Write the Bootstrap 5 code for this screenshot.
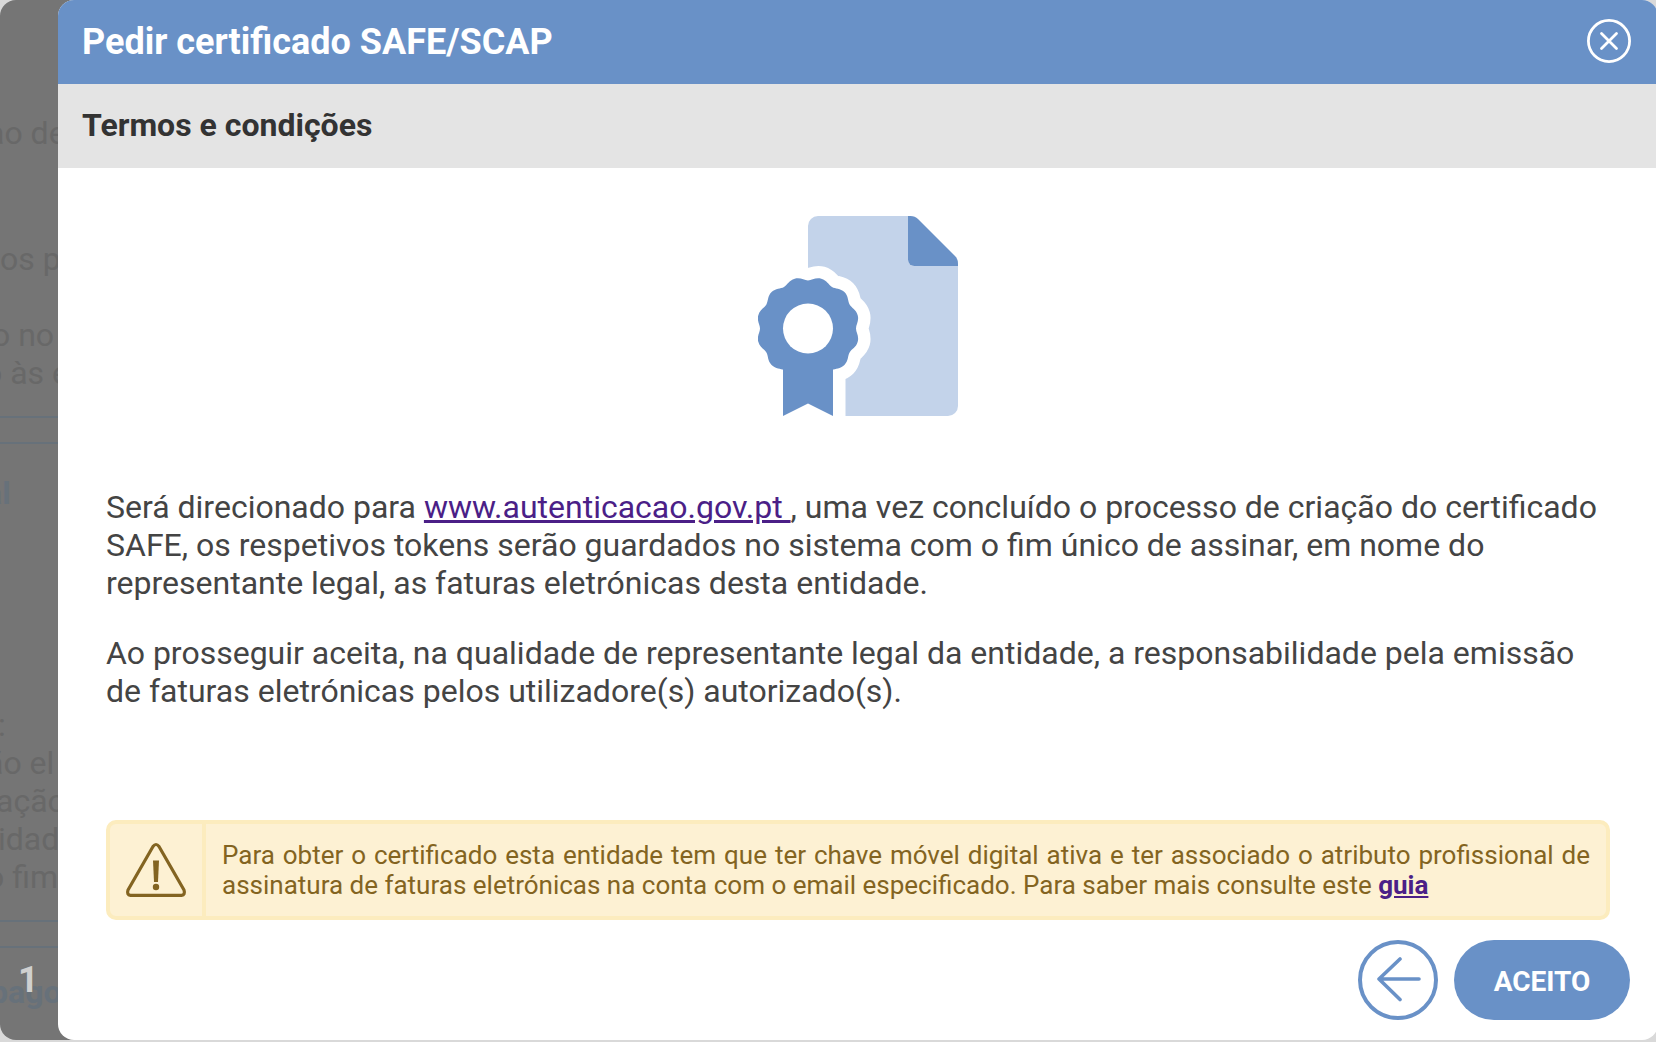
<!DOCTYPE html>
<html lang="pt">
  <head>
    <meta charset="UTF-8" />
    <meta name="viewport" content="width=device-width, initial-scale=1.0" />
    <title>Pedir certificado SAFE/SCAP</title>
    <link
      href="https://cdn.jsdelivr.net/npm/bootstrap@5.3.0/dist/css/bootstrap.min.css"
      rel="stylesheet"
    />
    <style>
      body {
        background: #d9d9d9;
        font-family: Roboto, "Liberation Sans", sans-serif;
        font-size: 32px;
        line-height: 38px;
        color: #444;
        overflow: hidden;
      }
      .screen {
        width: 1658px;
        height: 1040px;
      }

      /* dimmed page behind the dialog */
      .page-behind {
        width: 74px;
        margin-right: -16px;
        padding-top: 114px;
        background: #757575;
        border-radius: 16px 0 0 16px;
        color: #686868;
        white-space: nowrap;
      }
      .page-behind .rule {
        height: 2px;
        margin-top: 24px;
        background: #67717a;
      }
      .page-behind .heading {
        color: #67717a;
        font-weight: 700;
      }
      .page-number {
        left: 18px;
        bottom: 39px;
        font-size: 36px;
        line-height: 42px;
        font-weight: 700;
        color: #d0d0d0;
      }
      .line-1 { margin-left: -13px; }
      .line-2 { margin: 88px 0 0 0; }
      .line-3 { margin: 38px 0 0 -8px; }
      .line-4 { margin-left: -16px; }
      .line-5 { margin: 30px 0 0 -15px; }
      .line-6 { margin: 194px 0 0 -2px; }
      .line-7 { margin-left: -14px; }
      .line-8 { margin-left: -4px; }
      .line-9 { margin-left: -2px; }
      .line-10 { margin-left: -14px; }
      .line-11 { margin: 25px 0 0 -10px; }

      .dialog {
        z-index: 1;
        border-radius: 16px;
      }
      .dialog-title {
        height: 84px;
        padding: 0 26px 1px 24px;
        background: #6991c7;
        font-size: 36px;
      }
      .dialog-subtitle {
        height: 84px;
        padding: 0 24px 2px;
        background: #e4e4e4;
        color: #333;
        font-size: 32px;
      }
      .dialog-content {
        padding: 48px 48px 0;
      }
      .dialog-content p {
        margin-bottom: 32px;
      }
      .certificate {
        margin-bottom: 72px;
      }
      a.visited {
        color: #4b1f87;
      }

      .notice {
        height: 100px;
        margin-top: 110px;
        background: #fdf1d3;
        border: 4px solid #fcecbe;
        border-radius: 10px;
        color: #836421;
        font-size: 26px;
        line-height: 30px;
      }
      .notice-icon {
        width: 96px;
        border-right: 4px solid #fcecbe;
      }
      .notice-text {
        padding: 0 16px;
        text-align: justify;
      }

      .actions {
        padding: 20px 28px 20px;
        gap: 16px;
      }
      .btn-back {
        width: 80px;
        height: 80px;
        border: 4px solid #6991c7;
      }
      .btn-accept,
      .btn-accept:hover {
        width: 176px;
        height: 80px;
        background: #6991c7;
        color: #fff;
        font-size: 28px;
        font-weight: 700;
      }
    </style>
  </head>
  <body>
    <div class="screen d-flex">
      <div class="page-behind position-relative overflow-hidden flex-shrink-0">
        <div class="line-1">ao de</div>
        <div class="line-2">os p</div>
        <div class="line-3">o no</div>
        <div class="line-4">o às e</div>
        <div class="rule"></div>
        <div class="rule"></div>
        <div class="heading line-5">al</div>
        <div class="line-6">:</div>
        <div class="line-7">ão el</div>
        <div class="line-8">ação</div>
        <div class="line-9">idad</div>
        <div class="line-10">o fim</div>
        <div class="rule"></div>
        <div class="rule"></div>
        <div class="heading line-11">pago</div>
        <span class="page-number position-absolute">1</span>
      </div>

      <div class="dialog position-relative bg-white flex-grow-1 d-flex flex-column overflow-hidden">
        <div class="dialog-title d-flex align-items-center justify-content-between text-white fw-bold">
          <span>Pedir certificado SAFE/SCAP</span>
          <button type="button" class="btn p-0 border-0 text-white d-flex" aria-label="Fechar">
            <svg width="45" height="45" viewBox="0 0 45 45" fill="none" stroke="currentColor" stroke-width="2.8" stroke-linecap="round">
              <circle cx="22" cy="22" r="20.600" />
              <path d="M14.500 14.500L29.500 29.500M29.500 14.500L14.500 29.500" />
            </svg>
          </button>
        </div>
        <div class="dialog-subtitle d-flex align-items-center fw-bold">Termos e condições</div>

        <div class="dialog-content">
          <div class="certificate d-flex justify-content-center">
            <svg width="200" height="200" viewBox="0 0 200 200">
              <path fill="#c3d3ea" d="M60 0H150V43.750A6.250 6.250 0 0 0 156.250 50H200V190A10 10 0 0 1 190 200H50V10A10 10 0 0 1 60 0Z" />
              <path fill="#6991c7" d="M150 0H152.500Q157 0 160 3L197 40Q200 43 200 47.500V50H156.250A6.250 6.250 0 0 1 150 43.750Z" />
              <path fill="#fff" d="M49 112H87.500V200H49Z" />
              <path
                transform="translate(50 112.500)"
                fill="#fff"
                stroke="#fff"
                stroke-width="25"
                d="M0-48C4-48 7.500-51.300 13.300-49.700S20.500-43.600 24-41.600S32.200-40.600 36.400-36.400S39.600-27.500 41.600-24S48.100-19.100 49.700-13.300S48-4 48 0S51.300 7.500 49.700 13.300S43.600 20.500 41.600 24S40.600 32.200 36.400 36.400S27.500 39.600 24 41.600S19.100 48.100 13.300 49.700S4 48 0 48S-7.500 51.300-13.300 49.700S-20.500 43.600-24 41.600S-32.200 40.600-36.400 36.400S-39.600 27.500-41.600 24S-48.100 19.100-49.700 13.300S-48 4-48 0S-51.300-7.500-49.700-13.300S-43.600-20.500-41.600-24S-40.600-32.200-36.400-36.400S-27.500-39.600-24-41.600S-19.100-48.100-13.300-49.700S-4-48 0-48Z"
              />
              <path
                transform="translate(50 112.500)"
                fill="#6991c7"
                d="M0-48C4-48 7.500-51.300 13.300-49.700S20.500-43.600 24-41.600S32.200-40.600 36.400-36.400S39.600-27.500 41.600-24S48.100-19.100 49.700-13.300S48-4 48 0S51.300 7.500 49.700 13.300S43.600 20.500 41.600 24S40.600 32.200 36.400 36.400S27.500 39.600 24 41.600S19.100 48.100 13.300 49.700S4 48 0 48S-7.500 51.300-13.300 49.700S-20.500 43.600-24 41.600S-32.200 40.600-36.400 36.400S-39.600 27.500-41.600 24S-48.100 19.100-49.700 13.300S-48 4-48 0S-51.300-7.500-49.700-13.300S-43.600-20.500-41.600-24S-40.600-32.200-36.400-36.400S-27.500-39.600-24-41.600S-19.100-48.100-13.300-49.700S-4-48 0-48Z"
              />
              <path fill="#6991c7" d="M25 140H75V200L50 187.500L25 200Z" />
              <circle cx="50" cy="112.500" r="25" fill="#fff" />
            </svg>
          </div>

          <p>
            Será direcionado para
            <a href="#" class="visited">www.autenticacao.gov.pt </a>, uma vez concluído o processo
            de criação do certificado SAFE, os respetivos tokens serão guardados no sistema com o
            fim único de assinar, em nome do representante legal, as faturas eletrónicas desta
            entidade.
          </p>
          <p>
            Ao prosseguir aceita, na qualidade de representante legal da entidade, a
            responsabilidade pela emissão de faturas eletrónicas pelos utilizadore(s) autorizado(s).
          </p>

          <div class="notice d-flex">
            <div class="notice-icon flex-shrink-0 d-flex align-items-center justify-content-center">
              <svg width="62" height="56" viewBox="0 0 62 56" fill="none" stroke="currentColor" stroke-width="3.200">
                <path stroke-linejoin="round" d="M28 4.500Q31 0.500 34 4.500L59 48Q60.500 52.800 56.500 53.300H5.500Q1.500 52.800 3 48Z" />
                <path fill="currentColor" stroke="none" d="M28 18.500H34L33 40H29Z" />
                <circle cx="31" cy="45" r="3.200" fill="currentColor" stroke="none" />
              </svg>
            </div>
            <div class="notice-text align-self-center">
              Para obter o certificado esta entidade tem que ter chave móvel digital ativa e ter
              associado o atributo profissional de assinatura de faturas eletrónicas na conta com o
              email especificado. Para saber mais consulte este
              <a href="#" class="visited fw-bold">guia</a>
            </div>
          </div>
        </div>

        <div class="actions d-flex justify-content-end">
          <button type="button" class="btn btn-back rounded-circle p-0 d-flex align-items-center justify-content-center" aria-label="Voltar">
            <svg width="46" height="46" viewBox="0 0 46 46" fill="none" stroke="#6991c7" stroke-width="3.600" stroke-linecap="round" stroke-linejoin="round">
              <path d="M44 22H4M25 2L4 22L25 42.500" />
            </svg>
          </button>
          <button type="button" class="btn btn-accept rounded-pill p-0 pt-1">ACEITO</button>
        </div>
      </div>
    </div>

    <script src="https://cdn.jsdelivr.net/npm/bootstrap@5.3.0/dist/js/bootstrap.bundle.min.js"></script>
  </body>
</html>
